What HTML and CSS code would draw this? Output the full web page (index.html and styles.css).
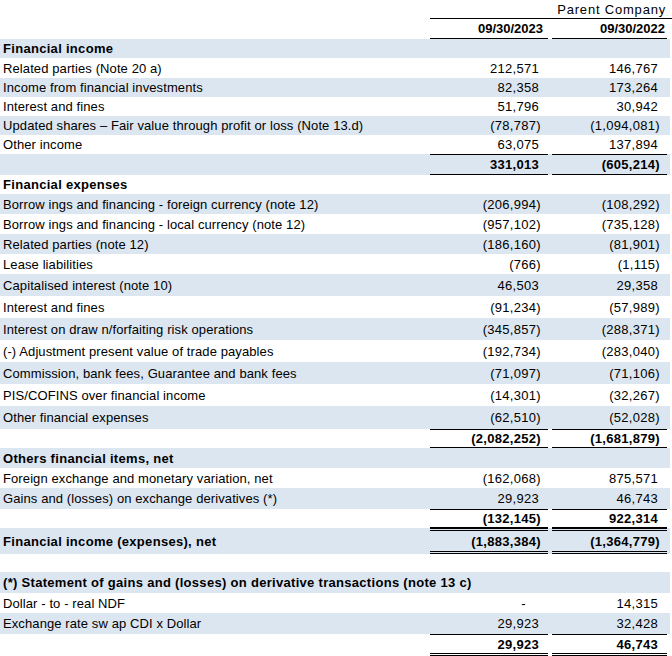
FILE: index.html
```html
<!DOCTYPE html>
<html lang="en">
<head>
<meta charset="utf-8">
<title>Financial income (expenses)</title>
<link rel="stylesheet" href="styles.css">
</head>
<body>
<div class="sheet">
  <div class="row head1 h19"><div></div><div class="group">Parent Company</div></div>
  <div class="row head2 h20"><div></div><div class="date">09/30/2023</div><div class="date d2">09/30/2022</div></div>

  <div class="row s h19"><div class="label b">Financial income</div><div></div><div></div></div>
  <div class="row h20"><div class="label">Related parties (Note 20 a)</div><div class="n p">212,571</div><div class="n p">146,767</div></div>
  <div class="row s h19"><div class="label">Income from financial investments</div><div class="n p">82,358</div><div class="n p">173,264</div></div>
  <div class="row h19"><div class="label">Interest and fines</div><div class="n p">51,796</div><div class="n p">30,942</div></div>
  <div class="row s h19"><div class="label">Updated shares – Fair value through profit or loss (Note 13.d)</div><div class="n">(78,787)</div><div class="n">(1,094,081)</div></div>
  <div class="row h19"><div class="label">Other income</div><div class="n p">63,075</div><div class="n p">137,894</div></div>
  <div class="row s h21 total"><div></div><div class="n p b">331,013</div><div class="n b">(605,214)</div></div>

  <div class="row h19"><div class="label b">Financial expenses</div><div></div><div></div></div>
  <div class="row s h20"><div class="label">Borrow ings and financing - foreign currency (note 12)</div><div class="n">(206,994)</div><div class="n">(108,292)</div></div>
  <div class="row h20"><div class="label">Borrow ings and financing - local currency (note 12)</div><div class="n">(957,102)</div><div class="n">(735,128)</div></div>
  <div class="row s h20"><div class="label">Related parties (note 12)</div><div class="n">(186,160)</div><div class="n">(81,901)</div></div>
  <div class="row h20"><div class="label">Lease liabilities</div><div class="n">(766)</div><div class="n">(1,115)</div></div>
  <div class="row s h22"><div class="label">Capitalised interest (note 10)</div><div class="n p">46,503</div><div class="n p">29,358</div></div>
  <div class="row h22"><div class="label">Interest and fines</div><div class="n">(91,234)</div><div class="n">(57,989)</div></div>
  <div class="row s h22"><div class="label">Interest on draw n/forfaiting risk operations</div><div class="n">(345,857)</div><div class="n">(288,371)</div></div>
  <div class="row h22"><div class="label">(-) Adjustment present value of trade payables</div><div class="n">(192,734)</div><div class="n">(283,040)</div></div>
  <div class="row s h22"><div class="label">Commission, bank fees, Guarantee and bank fees</div><div class="n">(71,097)</div><div class="n">(71,106)</div></div>
  <div class="row h22"><div class="label">PIS/COFINS over financial income</div><div class="n">(14,301)</div><div class="n">(32,267)</div></div>
  <div class="row s h23"><div class="label">Other financial expenses</div><div class="n">(62,510)</div><div class="n">(52,028)</div></div>
  <div class="row h19 total"><div></div><div class="n b">(2,082,252)</div><div class="n b">(1,681,879)</div></div>

  <div class="row s h20"><div class="label b">Others financial items, net</div><div></div><div></div></div>
  <div class="row h20"><div class="label">Foreign exchange and monetary variation, net</div><div class="n">(162,068)</div><div class="n p">875,571</div></div>
  <div class="row s h21"><div class="label">Gains and (losses) on exchange derivatives (*)</div><div class="n p">29,923</div><div class="n p">46,743</div></div>
  <div class="row h19 total"><div></div><div class="n b">(132,145)</div><div class="n p b">922,314</div></div>

  <div class="row s h26 grand"><div class="label b">Financial income (expenses), net</div><div class="n b">(1,883,384)</div><div class="n b">(1,364,779)</div></div>
  <div class="row h18"><div></div><div></div><div></div></div>

  <div class="row s h21"><div class="label b wide">(*) Statement of gains and (losses) on derivative transactions (note 13 c)</div></div>
  <div class="row h20"><div class="label">Dollar - to - real NDF</div><div class="n dash">-</div><div class="n p">14,315</div></div>
  <div class="row s h21"><div class="label">Exchange rate sw ap CDI x Dollar</div><div class="n p">29,923</div><div class="n p">32,428</div></div>
  <div class="row h22 last"><div></div><div class="n p b">29,923</div><div class="n p b">46,743</div></div>
</div>
</body>
</html>
```

FILE: styles.css
```css
html, body {
  margin: 0;
  padding: 0;
  background: #ffffff;
}

body {
  font-family: "Liberation Sans", Arial, sans-serif;
  font-size: 13px;
  color: #000000;
}

.sheet {
  width: 670px;
}

.row {
  display: grid;
  grid-template-columns: 426px 118px 115px;
  column-gap: 4px;
  padding-right: 3px;
  box-sizing: border-box;
  width: 670px;
}

.row > div {
  display: flex;
  align-items: center;
  box-sizing: border-box;
  white-space: nowrap;
}

.s {
  background: #dce6f1;
}

.h18 { height: 18px; }
.h19 { height: 19px; }
.h20 { height: 20px; }
.h21 { height: 21px; }
.h22 { height: 22px; }
.h23 { height: 23px; }
.h26 { height: 26px; }

.label {
  padding-left: 3px;
  letter-spacing: 0.1px;
}

.wide {
  grid-column: 1 / 4;
}

.b {
  font-weight: bold;
  letter-spacing: 0.3px;
}

.n {
  justify-content: flex-end;
  padding-right: 7px;
  letter-spacing: 0.3px;
}

.n.p {
  padding-right: 9px;
}

.n.dash {
  padding-right: 22px;
}

.head1 {
  padding-right: 0;
}

.group {
  grid-column: 2 / 4;
  justify-content: flex-end;
  padding-right: 6px;
  letter-spacing: 0.8px;
  border-bottom: 1px solid #000;
  margin-right: -5px;
}

.date {
  justify-content: flex-end;
  padding-right: 5px;
  font-weight: bold;
  border-bottom: 1px solid #000;
}

.date.d2 {
  padding-right: 2px;
}

.total .n {
  border-top: 1px solid #000;
  border-bottom: 1px solid #000;
}

.grand .n {
  border-top: 3px double #000;
  border-bottom: 3px double #000;
}

.last .n {
  border-top: 1px solid #000;
  border-bottom: 3px double #000;
}
```
